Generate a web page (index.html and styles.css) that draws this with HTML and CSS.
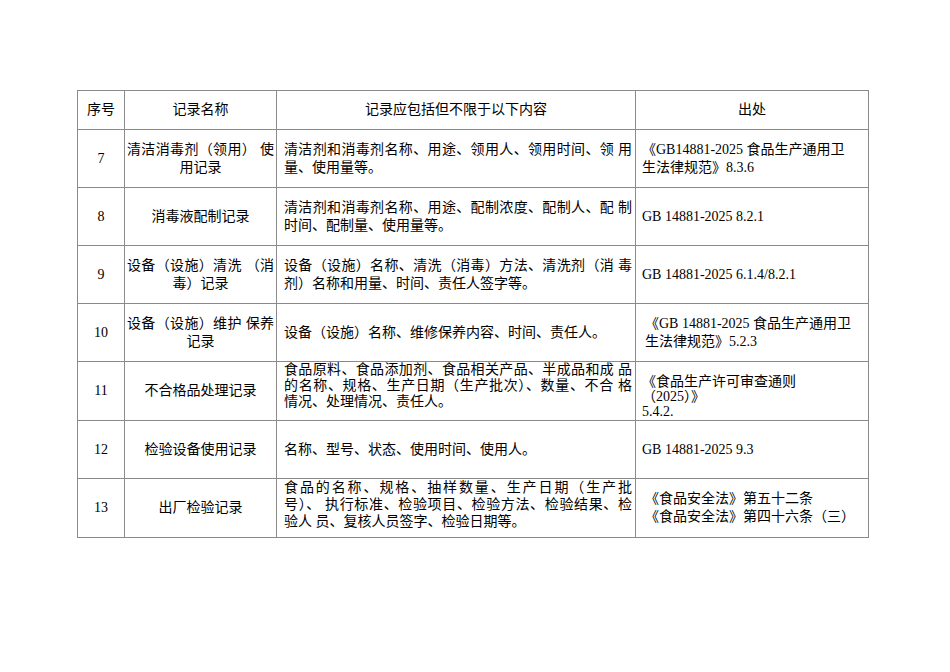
FILE: index.html
```html
<!DOCTYPE html>
<html lang="zh-CN">
<head>
<meta charset="utf-8">
<title>记录清单</title>
<link rel="stylesheet" href="styles.css">
</head>
<body>
<table class="records">
  <colgroup>
    <col class="c-no">
    <col class="c-name">
    <col class="c-content">
    <col class="c-source">
  </colgroup>
  <thead>
    <tr class="head-row">
      <th>序号</th>
      <th>记录名称</th>
      <th>记录应包括但不限于以下内容</th>
      <th>出处</th>
    </tr>
  </thead>
  <tbody>
    <tr>
      <td class="no">7</td>
      <td class="name"><span class="fill">清洁消毒剂（领用） 使</span>用记录</td>
      <td class="content"><span class="fill">清洁剂和消毒剂名称、用途、领用人、领用时间、领 用</span>量、使用量等。</td>
      <td class="source">《GB14881-2025 食品生产通用卫<br>生法律规范》8.3.6</td>
    </tr>
    <tr>
      <td class="no">8</td>
      <td class="name">消毒液配制记录</td>
      <td class="content"><span class="fill">清洁剂和消毒剂名称、用途、配制浓度、配制人、配 制</span>时间、配制量、使用量等。</td>
      <td class="source">GB 14881-2025 8.2.1</td>
    </tr>
    <tr>
      <td class="no">9</td>
      <td class="name"><span class="fill">设备（设施）清洗 （消</span>毒）记录</td>
      <td class="content"><span class="fill">设备（设施）名称、清洗（消毒）方法、清洗剂（消 毒</span>剂）名称和用量、时间、责任人签字等。</td>
      <td class="source">GB 14881-2025 6.1.4/8.2.1</td>
    </tr>
    <tr>
      <td class="no">10</td>
      <td class="name"><span class="fill">设备（设施）维护 保养</span>记录</td>
      <td class="content">设备（设施）名称、维修保养内容、时间、责任人。</td>
      <td class="source indent">《GB 14881-2025 食品生产通用卫<br>生法律规范》5.2.3</td>
    </tr>
    <tr class="dense">
      <td class="no">11</td>
      <td class="name">不合格品处理记录</td>
      <td class="content top"><span class="fill">食品原料、食品添加剂、食品相关产品、半成品和成 品</span><span class="fill">的名称、规格、生产日期（生产批次）、数量、不合 格</span>情况、处理情况、责任人。</td>
      <td class="source tight">《食品生产许可审查通则<br>（2025）》<br>5.4.2.</td>
    </tr>
    <tr>
      <td class="no">12</td>
      <td class="name">检验设备使用记录</td>
      <td class="content">名称、型号、状态、使用时间、使用人。</td>
      <td class="source">GB 14881-2025 9.3</td>
    </tr>
    <tr class="last">
      <td class="no">13</td>
      <td class="name">出厂检验记录</td>
      <td class="content top"><span class="fill">食品的名称、规格、抽样数量、生产日期（生产批</span><span class="fill">号）、 执行标准、检验项目、检验方法、检验结果、检</span>验人 员、复核人员签字、检验日期等。</td>
      <td class="source indent">《食品安全法》第五十二条<br>《食品安全法》第四十六条（三）</td>
    </tr>
  </tbody>
</table>
</body>
</html>
```

FILE: styles.css
```css
html, body {
  margin: 0;
  padding: 0;
  background: #ffffff;
}

body {
  padding: 90px 0 0 77px;
  font-family: "Liberation Serif", "Noto Sans CJK SC", serif;
  font-size: 14px;
  color: #000000;
}

.records {
  border-collapse: collapse;
  table-layout: fixed;
  width: 791px;
}

.c-no { width: 47px; }
.c-name { width: 152px; }
.c-content { width: 359px; }
.c-source { width: 233px; }

.records th,
.records td {
  border: 1px solid #8a8a8a;
  vertical-align: middle;
  line-height: 18px;
  padding: 0;
}

.records th {
  font-weight: normal;
  text-align: center;
  height: 38px;
}

.records td {
  height: 57px;
}

.records .last td {
  height: 58px;
}

.dense td {
  line-height: 16px;
}

.last .content {
  line-height: 17px;
}

.no {
  text-align: center;
}

.name {
  text-align: center;
  padding: 0 2px 0 2px !important;
}

.content {
  text-align: left;
  padding: 0 3px 0 7px !important;
}

.records .content.top {
  vertical-align: top;
}

.source {
  text-align: left;
  padding: 0 3px 0 6px !important;
}

.source.indent {
  padding-left: 9px !important;
}

.records .source.tight {
  line-height: 15px;
  vertical-align: bottom;
  padding-bottom: 1px !important;
}

.fill {
  display: block;
  text-align: justify;
  text-align-last: justify;
}
```
